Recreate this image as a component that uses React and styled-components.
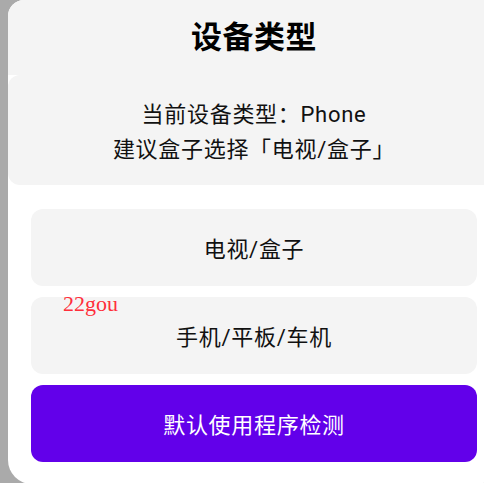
import React from "react";
import styled, { createGlobalStyle } from "styled-components";

const Global = createGlobalStyle`
  html, body {
    margin: 0;
    padding: 0;
    height: 100%;
    overflow: hidden;
    background: #aaaaaa;
  }
  body {
    font-family: Roboto, "Noto Sans CJK SC", "Noto Sans", sans-serif;
  }
`;

const Stage = styled.div`
  position: relative;
  width: 484px;
  height: 483px;
  overflow: hidden;
`;

const Panel = styled.div`
  margin-left: 8px;
  width: 492px;
  background: #ffffff;
  border-radius: 16px 16px 24px 24px;
  padding-bottom: 22px;
  overflow: hidden;
`;

const Header = styled.div`
  height: 75px;
  box-sizing: border-box;
  padding-bottom: 7px;
  background: #f4f4f4;
  display: flex;
  align-items: center;
  justify-content: center;
  font-family: Roboto, "Noto Sans CJK SC", sans-serif;
  font-size: 31px;
  letter-spacing: 0.5px;
  font-weight: 700;
  color: #000;
`;

const Info = styled.div`
  height: 110px;
  box-sizing: border-box;
  padding-top: 3px;
  background: #f4f4f4;
  border-radius: 12px;
  display: flex;
  flex-direction: column;
  align-items: center;
  justify-content: center;
  font-family: Roboto, "Noto Sans CJK SC", sans-serif;
  font-size: 22px;
  letter-spacing: 0.7px;
  line-height: 35px;
  color: #111;
`;

const Options = styled.div`
  display: flex;
  flex-direction: column;
  gap: 11px;
  padding: 24px 23px 0;
`;

const Option = styled.button`
  height: 77px;
  border: none;
  border-radius: 12px;
  background: ${(p) => (p.$primary ? "#6200ea" : "#f4f4f4")};
  color: ${(p) => (p.$primary ? "#ffffff" : "#111111")};
  font-family: Roboto, "Noto Sans CJK SC", sans-serif;
  font-size: 22px;
  letter-spacing: 0.7px;
  display: flex;
  align-items: center;
  justify-content: center;
  padding: 0 0 2px;
  cursor: pointer;
`;

const Watermark = styled.div`
  position: absolute;
  left: 63px;
  top: 293px;
  font-family: "Liberation Serif", serif;
  font-size: 22px;
  line-height: 1;
  color: #ff2e3a;
  pointer-events: none;
`;

export default function App() {
  return (
    <>
      <Global />
      <Stage>
        <Panel>
          <Header>设备类型</Header>
          <Info>
            <div>当前设备类型：Phone</div>
            <div>建议盒子选择「电视/盒子」</div>
          </Info>
          <Options>
            <Option>电视/盒子</Option>
            <Option>手机/平板/车机</Option>
            <Option $primary>默认使用程序检测</Option>
          </Options>
        </Panel>
        <Watermark>22gou</Watermark>
      </Stage>
    </>
  );
}
